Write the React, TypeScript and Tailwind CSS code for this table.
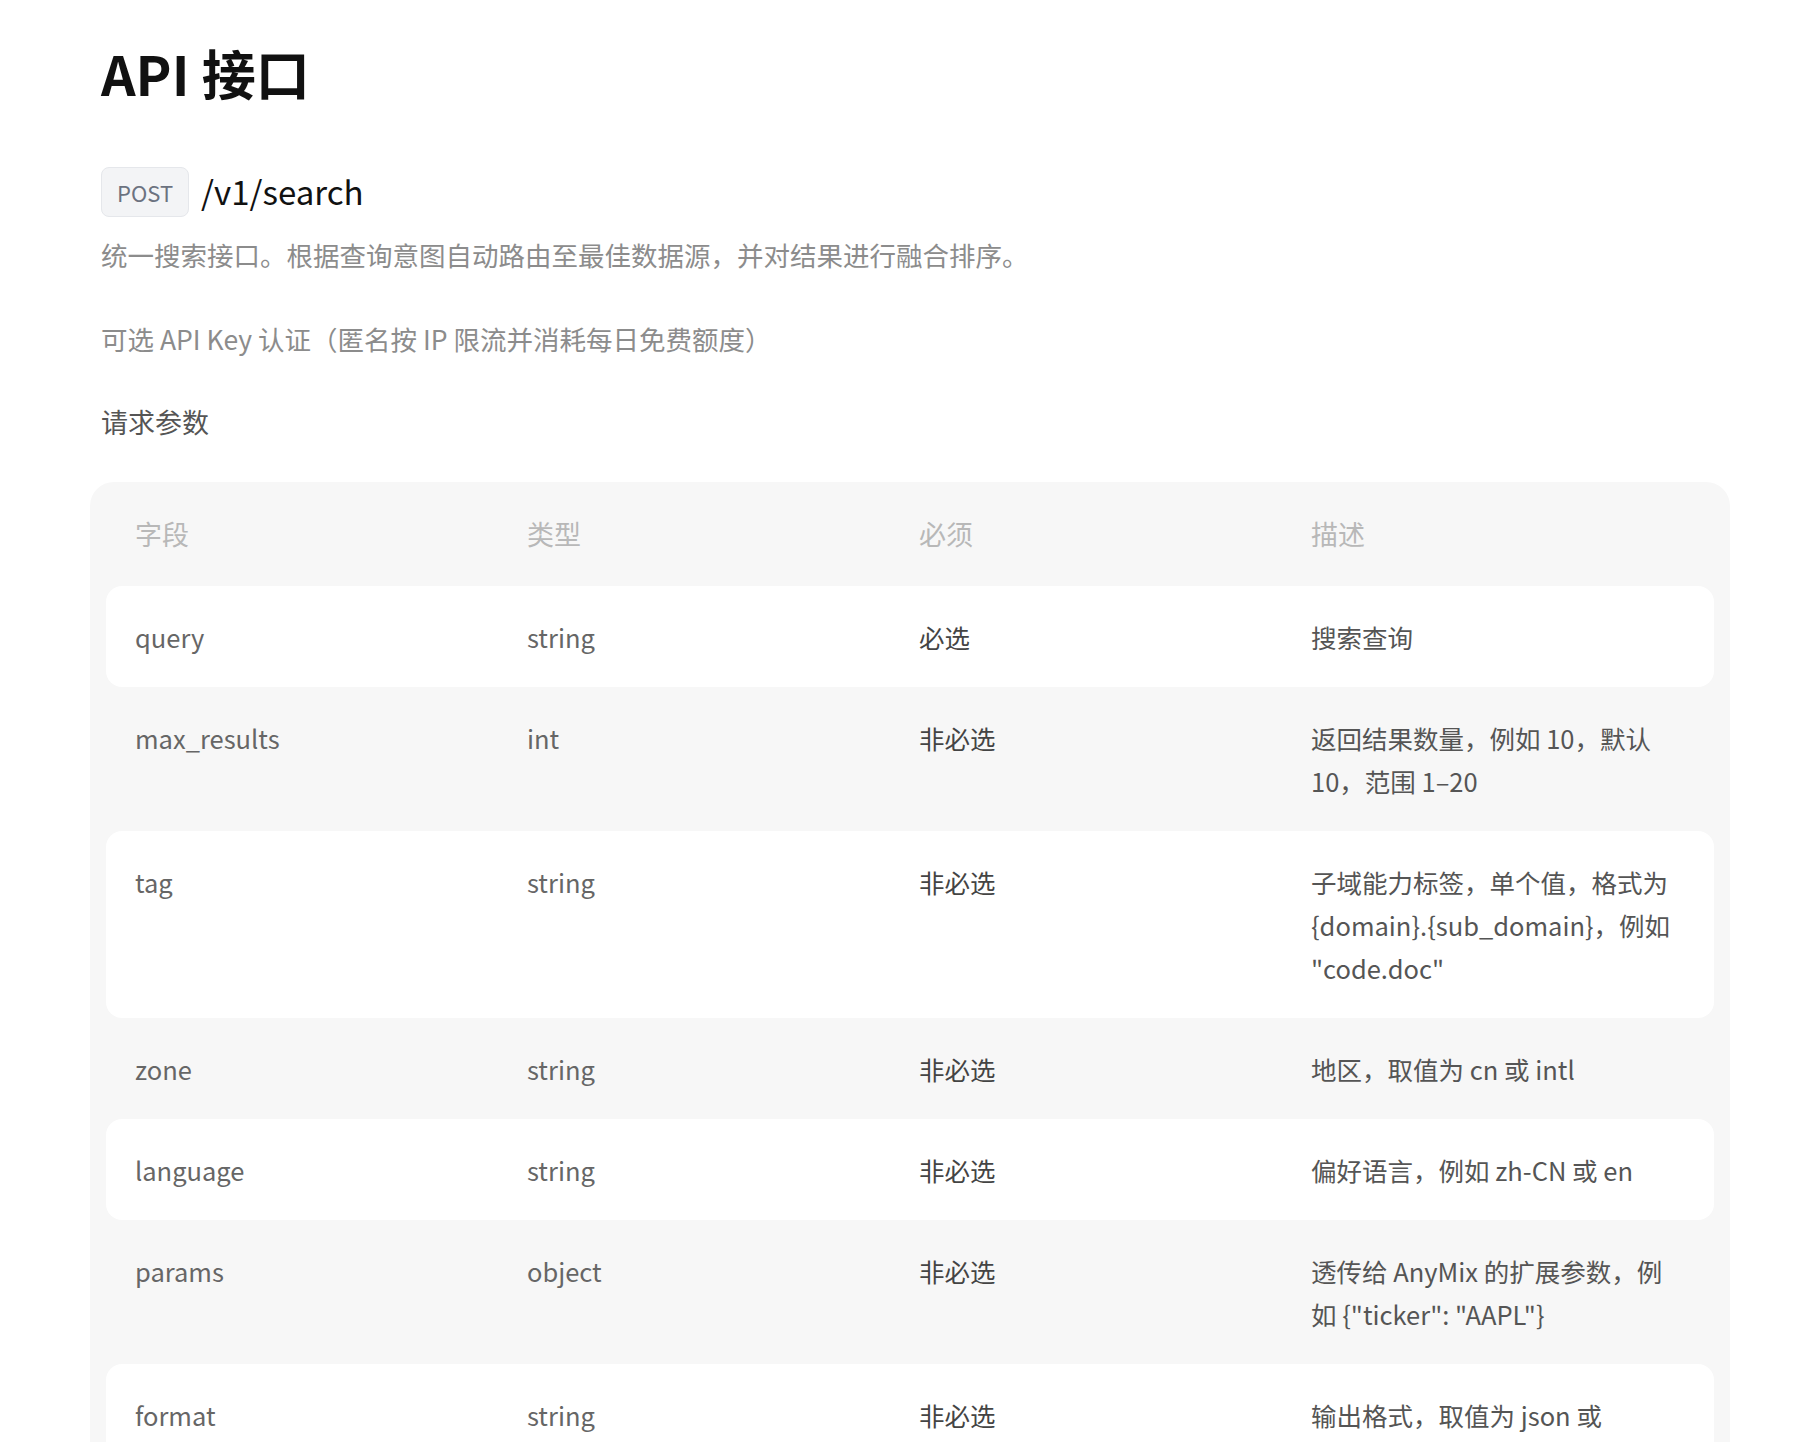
const rows = [
  { field: "query", type: "string", req: "必选", desc: "搜索查询" },
  { field: "max_results", type: "int", req: "非必选", desc: "返回结果数量，例如 10，默认 10，范围 1–20" },
  { field: "tag", type: "string", req: "非必选", desc: "子域能力标签，单个值，格式为 {domain}.{sub_domain}，例如 \"code.doc\"" },
  { field: "zone", type: "string", req: "非必选", desc: "地区，取值为 cn 或 intl" },
  { field: "language", type: "string", req: "非必选", desc: "偏好语言，例如 zh-CN 或 en" },
  { field: "params", type: "object", req: "非必选", desc: "透传给 AnyMix 的扩展参数，例如 {\"ticker\": \"AAPL\"}" },
  { field: "format", type: "string", req: "非必选", desc: "输出格式，取值为 json 或 markdown" },
];

const font = "font-['Noto_Sans_CJK_SC','Noto_Sans',sans-serif]";

export default function App() {
  return (
    <div className={`min-h-screen bg-white pl-[101px] pr-[81px] pt-[40px] pb-16 ${font}`}>
      <h1 className="text-[54px] leading-[65px] font-bold text-[#111111]">API 接口</h1>

      <div className="mt-[62px] flex items-center gap-3">
        <span className="h-[50px] px-[15px] flex items-center rounded-lg border border-[#e5e7eb] bg-[#f3f4f6] text-[22px] text-[#6b7280]">
          POST
        </span>
        <span className="text-[33px] text-[#111111]">/v1/search</span>
      </div>

      <p className="mt-[17px] text-[26.5px] leading-[42px] text-[#8c8c8c]">
        统一搜索接口。根据查询意图自动路由至最佳数据源，并对结果进行融合排序。
      </p>
      <p className="mt-[42px] text-[26.5px] leading-[42px] text-[#8c8c8c]">
        可选 API Key 认证（匿名按 IP 限流并消耗每日免费额度）
      </p>

      <h2 className="mt-[41px] text-[27px] leading-[42px] text-[#555555]">请求参数</h2>

      <div className="-mx-[11px] mt-[39px] rounded-[24px] bg-[#f7f7f7] px-4 pb-4">
        <div className="grid grid-cols-[370px_370px_370px_364px] gap-x-[22px] px-[29px] py-[31px] text-[27px] leading-[42px] text-[#b8b8b8]">
          <div>字段</div>
          <div>类型</div>
          <div>必须</div>
          <div>描述</div>
        </div>
        {rows.map((r, i) => (
          <div
            key={r.field}
            className={`grid grid-cols-[370px_370px_370px_364px] gap-x-[22px] px-[29px] py-[29px] text-[25.5px] leading-[43px] rounded-2xl ${
              i % 2 === 0 ? "bg-white" : ""
            }`}
          >
            <div className="text-[#666666]">{r.field}</div>
            <div className="text-[#666666]">{r.type}</div>
            <div className="text-[#444444]">{r.req}</div>
            <div className="text-[#555555]">{r.desc}</div>
          </div>
        ))}
      </div>
    </div>
  );
}
